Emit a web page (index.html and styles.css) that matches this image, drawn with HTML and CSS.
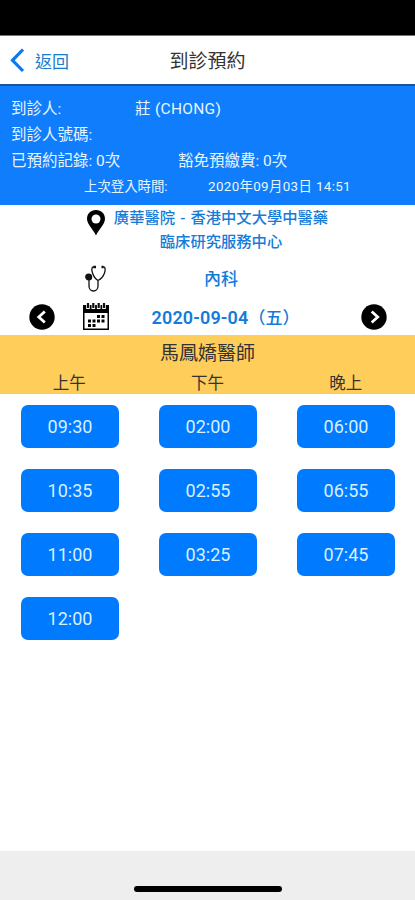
FILE: index.html
```html
<!DOCTYPE html>
<html lang="zh-Hant">
<head>
<meta charset="utf-8">
<meta name="viewport" content="width=device-width">
<title>到診預約</title>
<link rel="stylesheet" href="styles.css">
</head>
<body>
<div class="status"></div>
<header class="nav">
  <div class="back">
    <svg width="15" height="25" viewBox="0 0 15 25"><path d="M13 1.500 2.500 12.300 13 23" fill="none" stroke="#0a78f0" stroke-width="3.2"/></svg>
    <span>返回</span>
  </div>
  <h1>到診預約</h1>
</header>
<section class="patient">
  <div class="line"><span class="who">到診人:</span><span class="name">莊 (CHONG)</span></div>
  <div class="line"><span>到診人號碼:</span></div>
  <div class="line"><span class="booked">已預約記錄: 0次</span><span>豁免預繳費: 0次</span></div>
  <div class="line login"><span class="login-label">上次登入時間:</span><span class="login-time">2020年09月03日 14:51</span></div>
</section>
<section class="choice">
  <div class="row place">
    <span></span>
    <svg width="20" height="28" viewBox="0 0 20 28"><path d="M10 1C4.700 1 1 4.800 1 9.800 1 15.500 7 20 10 26.500 13 20 19 15.500 19 9.800 19 4.800 15.300 1 10 1Z"/><circle cx="10" cy="10" r="4.500" fill="#fff"/></svg>
    <p>廣華醫院 - 香港中文大學中醫藥<br>臨床研究服務中心</p>
  </div>
  <div class="row dept">
    <span></span>
    <svg width="24" height="28" viewBox="0 0 24 28" fill="none" stroke="#111" stroke-width="1.300"><path d="M11.500 2H9.500C7.500 2 7.500 5 8.500 8c1 3 3 6 5.500 7.500C17 14 19.500 11 20.500 8 21.500 5 21.500 2 19.500 2H18M14 15.500V21c0 3-2 5-4.500 5S5 24 5 21v-7"/><circle cx="4.700" cy="12" r="2.900" fill="#111"/><path d="M9.500 2h2.500M17.500 2h2" stroke-width="2.400"/></svg>
    <p>內科</p>
  </div>
  <div class="row date">
    <svg width="26" height="26" viewBox="0 0 26 26"><circle cx="13" cy="13" r="12.700"/><path d="m15.800 7.500-6 5.500 6 5.500" fill="none" stroke="#fff" stroke-width="2.800"/></svg>
    <svg width="26" height="27" viewBox="0 0 26 27"><path d="M0 2h26v25H0z"/><path d="M1.500 10h23v15.500h-23z" fill="#fff"/><path d="M5 0v6M10.300 0v6M15.700 0v6M21 0v6" stroke="#fff" stroke-width="3.600"/><path d="M5 0v5M10.300 0v5M15.700 0v5M21 0v5" stroke="#111" stroke-width="2.200"/><path d="M14 12h3v3h-3zM18.500 12h3v3h-3zM5 16.500h3v3H5zM9.500 16.500h3v3h-3zM14 16.500h3v3h-3zM18.500 16.500h3v3h-3zM5 21h3v3H5zM9.500 21h3v3h-3z"/></svg>
    <p>2020-09-04<span class="weekday">（五）</span></p>
    <svg width="26" height="26" viewBox="0 0 26 26"><circle cx="13" cy="13" r="12.700"/><path d="m10.700 7.500 6 5.500-6 5.500" fill="none" stroke="#fff" stroke-width="2.800"/></svg>
  </div>
</section>
<section class="doctor">
  <h2>馬鳳嬌醫師</h2>
  <div class="periods"><span>上午</span><span>下午</span><span>晚上</span></div>
</section>
<main class="slots">
  <div class="col"><button>09:30</button><button>10:35</button><button>11:00</button><button>12:00</button></div>
  <div class="col"><button>02:00</button><button>02:55</button><button>03:25</button></div>
  <div class="col"><button>06:00</button><button>06:55</button><button>07:45</button></div>
</main>
<footer class="home"><div class="bar"></div></footer>
</body>
</html>
```
FILE: styles.css
```css
* { box-sizing: border-box; }
body {
  margin: 0;
  height: 900px;
  display: flex;
  flex-direction: column;
  background: #fff;
  font-family: Roboto, "Noto Sans CJK TC", sans-serif;
  color: #333;
  overflow: hidden;
}
h1, h2, p { margin: 0; font-weight: 400; }
svg { display: block; }
.status { height: 36px; background: #000; border-bottom: 1px solid #777; }
.nav {
  height: 50px;
  display: grid;
  grid-template-columns: 1fr auto 1fr;
  align-items: center;
  border-bottom: 2px solid #1c559c;
}
.back { display: flex; align-items: center; gap: 10px; padding-left: 10px; font-size: 17px; color: #187bd0; }
.nav h1 { font-size: 19px; line-height: 28px; padding-top: 3px; }
.patient { height: 119px; padding: 10px 11px 0; background: #0f7dfc; color: #e6f6ff; font-size: 15.5px; }
.line { display: flex; height: 26px; line-height: 26px; white-space: nowrap; }
.who { width: 124px; }
.name { letter-spacing: 0.3px; }
.booked { width: 167px; }
.login { padding-left: 73px; font-size: 13.4px; }
.login-label { width: 124px; }
.login-time { letter-spacing: 0.35px; }
.choice { height: 130px; color: #147bd8; }
.row {
  display: grid;
  grid-template-columns: 83px 26px 224px 82px;
  align-items: center;
  justify-items: center;
}
.row p { font-weight: 500; text-align: center; white-space: nowrap; }
.row svg { fill: #000; }
.row.dept svg { fill: none; }
.place { height: 55px; font-size: 15.3px; line-height: 24px; padding-bottom: 5px; word-spacing: 1.3px; }
.place svg { margin-bottom: 14px; }
.dept { height: 38px; font-size: 17px; }
.dept p { padding-bottom: 4px; }
.date { height: 37px; font-size: 18px; }
.date p { font-weight: 600; letter-spacing: 0.15px; padding-bottom: 1px; }
.weekday { font-size: 17px; font-weight: 500; letter-spacing: 0; margin-right: -9px; }
.doctor { height: 59px; background: #ffcd59; text-align: center; }
.doctor h2 { font-size: 19px; line-height: 37px; height: 36px; }
.periods { display: grid; grid-template-columns: repeat(3, 1fr); font-size: 16.5px; line-height: 25px; }
.slots { flex: 1; display: grid; grid-template-columns: repeat(3, 1fr); padding: 11px 0 0 1px; }
.col { display: flex; flex-direction: column; align-items: center; gap: 21px; }
.col button {
  width: 98px;
  height: 43px;
  padding: 0 0 1px;
  border: 0;
  border-radius: 7px;
  background: #007aff;
  color: #d9efff;
  font: 400 18px Roboto, sans-serif;
}
.home { height: 49px; background: #eee; display: flex; justify-content: center; padding-top: 35px; }
.bar { width: 148px; height: 6px; border-radius: 3px; background: #000; }
```
